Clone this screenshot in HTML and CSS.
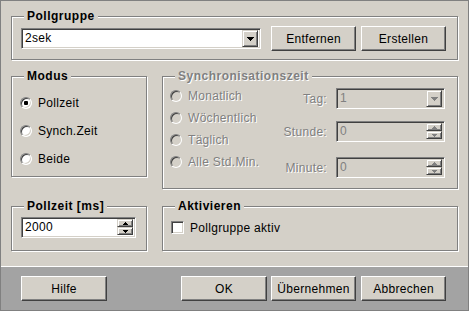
FILE: index.html
```html
<!DOCTYPE html>
<html lang="de">
<head>
<meta charset="utf-8">
<title>Pollgruppe</title>
<link rel="stylesheet" href="styles.css">
</head>
<body>
<div class="dialog">
  <div class="main">
    <fieldset class="group g-poll">
      <legend>Pollgruppe</legend>
      <div class="poll-body">
        <div class="box combo wide">
          <span class="val">2sek</span>
          <span class="mini dd"><svg width="7" height="4" viewBox="0 0 7 4"><path d="M0 0h7v1H0zM1 1h5v1H1zM2 2h3v1H2zM3 3h1v1H3z"/></svg></span>
        </div>
        <button class="btn b-ent">Entfernen</button>
        <button class="btn b-ers">Erstellen</button>
      </div>
    </fieldset>

    <div class="cols row2">
      <fieldset class="group g-modus">
        <legend>Modus</legend>
        <div class="modus-body">
          <div class="opt"><span class="radio checked"></span><span class="lbl">Pollzeit</span></div>
          <div class="opt"><span class="radio"></span><span class="lbl">Synch.Zeit</span></div>
          <div class="opt"><span class="radio"></span><span class="lbl">Beide</span></div>
        </div>
      </fieldset>

      <fieldset class="group g-sync disabled">
        <legend>Synchronisationszeit</legend>
        <div class="sync-body">
          <div class="sync-opts">
            <div class="opt"><span class="radio off"></span><span class="lbl">Monatlich</span></div>
            <div class="opt"><span class="radio off"></span><span class="lbl">Wöchentlich</span></div>
            <div class="opt"><span class="radio off"></span><span class="lbl">Täglich</span></div>
            <div class="opt"><span class="radio off"></span><span class="lbl">Alle Std.Min.</span></div>
          </div>
          <div class="sync-fields">
            <div class="field f1">
              <span class="flbl">Tag:</span>
              <div class="box combo off">
                <span class="val">1</span>
                <span class="mini dd"><svg width="7" height="4" viewBox="0 0 7 4"><path d="M0 0h7v1H0zM1 1h5v1H1zM2 2h3v1H2zM3 3h1v1H3z"/></svg></span>
              </div>
            </div>
            <div class="field f2">
              <span class="flbl">Stunde:</span>
              <div class="box spin off">
                <span class="val">0</span>
                <span class="spinbtns">
                  <span class="mini up"><svg width="5" height="3" viewBox="0 0 5 3"><path d="M2 0h1v1H2zM1 1h3v1H1zM0 2h5v1H0z"/></svg></span>
                  <span class="mini down"><svg width="5" height="3" viewBox="0 0 5 3"><path d="M0 0h5v1H0zM1 1h3v1H1zM2 2h1v1H2z"/></svg></span>
                </span>
              </div>
            </div>
            <div class="field f3">
              <span class="flbl">Minute:</span>
              <div class="box spin off">
                <span class="val">0</span>
                <span class="spinbtns">
                  <span class="mini up"><svg width="5" height="3" viewBox="0 0 5 3"><path d="M2 0h1v1H2zM1 1h3v1H1zM0 2h5v1H0z"/></svg></span>
                  <span class="mini down"><svg width="5" height="3" viewBox="0 0 5 3"><path d="M0 0h5v1H0zM1 1h3v1H1zM2 2h1v1H2z"/></svg></span>
                </span>
              </div>
            </div>
          </div>
        </div>
      </fieldset>
    </div>

    <div class="cols row3">
      <fieldset class="group g-pz">
        <legend>Pollzeit [ms]</legend>
        <div class="pz-body">
          <div class="box spin pz">
            <span class="val">2000</span>
            <span class="spinbtns">
              <span class="mini up"><svg width="5" height="3" viewBox="0 0 5 3"><path d="M2 0h1v1H2zM1 1h3v1H1zM0 2h5v1H0z"/></svg></span>
              <span class="mini down"><svg width="5" height="3" viewBox="0 0 5 3"><path d="M0 0h5v1H0zM1 1h3v1H1zM2 2h1v1H2z"/></svg></span>
            </span>
          </div>
        </div>
      </fieldset>
      <fieldset class="group g-akt">
        <legend>Aktivieren</legend>
        <div class="akt-body">
          <span class="check"></span><span class="lbl">Pollgruppe aktiv</span>
        </div>
      </fieldset>
    </div>
  </div>

  <div class="footer">
    <button class="btn b-hilfe">Hilfe</button>
    <button class="btn b-ok">OK</button>
    <button class="btn b-ueb">Übernehmen</button>
    <button class="btn b-abb">Abbrechen</button>
  </div>
</div>
</body>
</html>
```

FILE: styles.css
```css
* { box-sizing: border-box; }
html, body { margin: 0; padding: 0; }
body {
  font-family: "Liberation Sans", Arial, sans-serif;
  font-size: 12px;
  letter-spacing: 0.3px;
  color: #000;
  background: #d4d0c8;
}
.dialog {
  width: 469px;
  height: 311px;
  border: 1px solid #808080;
  background: #d4d0c8;
  display: flex;
  flex-direction: column;
}
.main {
  flex: 1;
  padding: 8px 10px 0 10px;
}

/* group boxes */
.group {
  margin: 0;
  padding: 0;
  min-width: 0;
  border: 1px solid #808080;
  box-shadow: 1px 1px 0 #fff, inset 1px 1px 0 #fff;
}
.group legend {
  margin-left: 12px;
  padding: 0 3px;
  font-weight: bold;
  letter-spacing: 0.5px;
  line-height: 14px;
  background: #d4d0c8;
}
.disabled legend,
.disabled .lbl,
.disabled .flbl {
  color: #808080;
  text-shadow: 1px 1px 0 #fff;
}

.g-poll { height: 51px; }
.cols {
  display: grid;
  grid-template-columns: 136px 1fr;
  column-gap: 15px;
  align-items: start;
}
.row2 { margin-top: 9px; }
.row3 { margin-top: 10px; }
.g-modus { height: 108px; }
.g-sync { height: 120px; }
.row3 .group { height: 52px; }

/* sunken boxes */
.box {
  height: 21px;
  border: 1px solid;
  border-color: #808080 #fff #fff #808080;
  box-shadow: inset 1px 1px 0 #404040, inset -1px -1px 0 #d4d0c8;
  padding: 2px 2px 2px 2px;
  background: #fff;
  display: flex;
  align-items: stretch;
}
.box.off { background: #d4d0c8; color: #808080; }
.box .val {
  flex: 1;
  line-height: 15px;
  padding-left: 1px;
  white-space: nowrap;
}
.box.combo, .box.spin { padding: 1px 2px 2px 2px; }
.box.combo .val, .box.spin .val { padding-top: 1px; }

.mini {
  display: flex;
  align-items: center;
  justify-content: center;
  background: #d4d0c8;
  border: 1px solid;
  border-color: #d4d0c8 #404040 #404040 #d4d0c8;
  box-shadow: inset 1px 1px 0 #fff, inset -1px -1px 0 #808080;
}
.mini svg { display: block; fill: #000; }
.off .mini svg { fill: #808080; }
.dd { width: 16px; height: 17px; }
.spinbtns {
  display: flex;
  flex-direction: column;
  width: 16px;
}
.spinbtns .up { height: 9px; }
.spinbtns .down { height: 8px; }

/* buttons */
.btn {
  width: 85px;
  height: 25px;
  margin: 0;
  padding: 0;
  font: inherit;
  letter-spacing: inherit;
  color: #000;
  background: #d4d0c8;
  border: 1px solid;
  border-color: #fff #404040 #404040 #fff;
  box-shadow: inset -1px -1px 0 #808080;
}

/* Pollgruppe */
.poll-body {
  display: flex;
  align-items: center;
  padding: 3px 11px 0 9px;
}
.combo.wide { flex: 1; }
.b-ent { margin-left: 10px; }
.b-ers { margin-left: 5px; }

/* radios */
.opt {
  display: flex;
  align-items: center;
  height: 16px;
}
.radio {
  position: relative;
  width: 12px;
  height: 12px;
  flex: none;
  border-radius: 50%;
  border: 1px solid;
  border-color: #808080 #fff #fff #808080;
  box-shadow: inset 1px 1px 0 #404040, inset -1px -1px 0 #d4d0c8;
  background: #fff;
}
.radio.off { background: #d4d0c8; }
.radio.checked::after {
  content: "";
  position: absolute;
  left: 3px;
  top: 3px;
  width: 4px;
  height: 4px;
  border-radius: 1px;
  background: #000;
}
.opt .lbl { margin-left: 6px; white-space: nowrap; }

.modus-body {
  display: flex;
  flex-direction: column;
  gap: 12px;
  padding: 12px 0 0 8px;
}

/* Synchronisation */
.sync-body {
  display: flex;
  padding: 5px 12px 0 7px;
}
.sync-opts {
  display: flex;
  flex-direction: column;
  gap: 6px;
}
.sync-fields {
  margin-left: auto;
  display: flex;
  flex-direction: column;
}
.field {
  display: flex;
  align-items: center;
  justify-content: flex-end;
}
.field .box { width: 109px; margin-left: 9px; }
.f2 { margin-top: 12px; }
.f3 { margin-top: 15px; }

/* Pollzeit */
.pz-body { padding: 4px 0 0 9px; }
.box.pz { width: 115px; }

/* Aktivieren */
.akt-body {
  display: flex;
  align-items: center;
  height: 21px;
  margin-top: 4px;
  padding-left: 8px;
}
.check {
  width: 13px;
  height: 13px;
  flex: none;
  background: #fff;
  border: 1px solid;
  border-color: #808080 #fff #fff #808080;
  box-shadow: inset 1px 1px 0 #404040, inset -1px -1px 0 #d4d0c8;
}
.akt-body .lbl { margin-left: 6px; }

/* footer */
.footer {
  height: 44px;
  flex: none;
  background: #a3a3a3;
  border-top: 1px solid #fff;
  display: flex;
  align-items: flex-start;
  padding: 9px 22px 0 20px;
}
.b-hilfe { width: 86px; }
.b-ok { width: 86px; margin-left: auto; }
.b-ueb { margin-left: 4px; }
.b-abb { margin-left: 5px; }
```
